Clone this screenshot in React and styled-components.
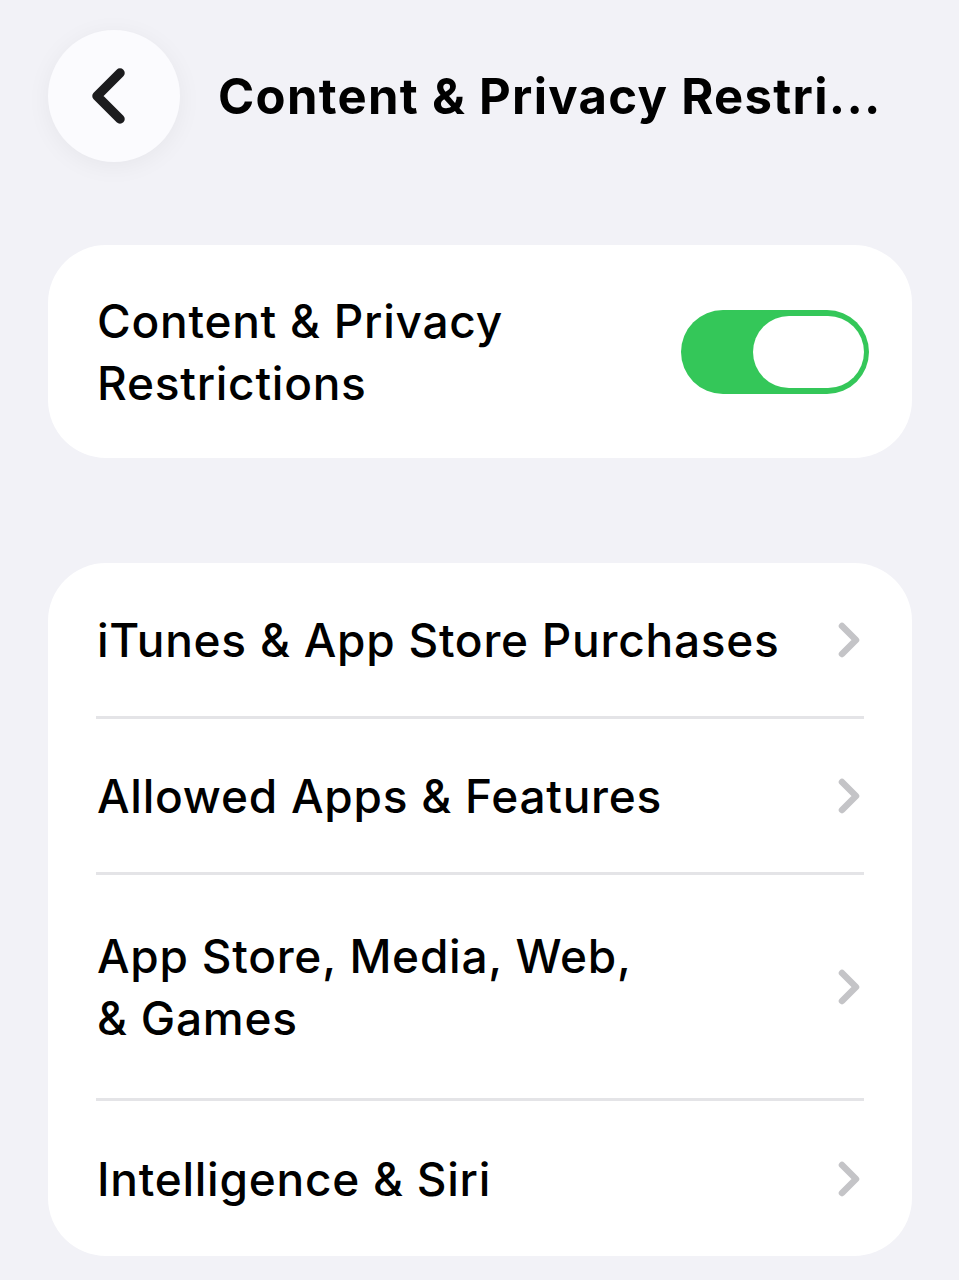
import React from 'react';
import styled, { createGlobalStyle } from 'styled-components';

const GlobalStyle = createGlobalStyle`
	html, body {
		margin: 0;
		padding: 0;
		background: #f2f2f7;
	}
	body {
		font-family: Inter, "Noto Sans", "Liberation Sans", sans-serif;
		color: #000;
		-webkit-font-smoothing: antialiased;
	}
`;

const Page = styled.div`
	width: 959px;
	min-height: 1280px;
	box-sizing: border-box;
	padding: 30px 47px 0 48px;
	display: flex;
	flex-flow: column;
`;

const Header = styled.div`
	display: flex;
	align-items: center;
	gap: 38px;
	height: 132px;
`;

const BackButton = styled.button`
	flex: none;
	width: 132px;
	height: 132px;
	border-radius: 50%;
	border: none;
	outline: none;
	padding: 0;
	background: #fbfbfe;
	box-shadow: 0 4px 24px rgba(0, 0, 0, 0.05);
	display: flex;
	align-items: center;
	justify-content: center;
	cursor: pointer;
	svg {
		margin-left: -10px;
	}
`;

const Title = styled.h1`
	margin: 0;
	font-size: 49px;
	font-weight: 700;
	letter-spacing: 1.3px;
	white-space: nowrap;
	overflow: hidden;
	text-overflow: ellipsis;
`;

const Card = styled.div`
	background: #fff;
	border-radius: 58px;
	margin-top: ${(props) => props.gap}px;
	display: flex;
	flex-flow: column;
`;

const ToggleRow = styled.div`
	display: flex;
	align-items: center;
	justify-content: space-between;
	padding: 45px 43px 44px 49px;
`;

const Label = styled.div`
	font-size: 46px;
	font-weight: 500;
	line-height: 62px;
	letter-spacing: 0.75px;
`;

const Switch = styled.div`
	flex: none;
	width: 188px;
	height: 84px;
	border-radius: 42px;
	background: ${(props) => (props.on ? '#34c759' : '#e9e9eb')};
	display: flex;
	align-items: center;
	justify-content: ${(props) => (props.on ? 'flex-end' : 'flex-start')};
	padding: 0 5px;
	box-sizing: border-box;
`;

const Knob = styled.div`
	width: 111px;
	height: 72px;
	border-radius: 36px;
	background: #fff;
`;

const Row = styled.div`
	display: flex;
	align-items: center;
	justify-content: space-between;
	margin: 0 48px;
	padding: ${(props) => (props.tall ? '50px' : props.last ? '47px' : '46px')} 2px
		${(props) => (props.tall ? '49px' : props.last ? '46px' : '45px')} 1px;
	border-bottom: ${(props) => (props.last ? 'none' : '3px solid #e4e4e7')};
`;

const Chevron = () => (
	<svg width="26" height="40" viewBox="0 0 26 40">
		<path
			d="M6 6 L20 20 L6 34"
			fill="none"
			stroke="#c4c4c7"
			strokeWidth="6.5"
			strokeLinecap="round"
			strokeLinejoin="round"
		/>
	</svg>
);

const BackChevron = () => (
	<svg width="44" height="60" viewBox="0 0 44 60">
		<path
			d="M33 7 L10 30 L33 53"
			fill="none"
			stroke="#1c1c1e"
			strokeWidth="9.5"
			strokeLinecap="round"
			strokeLinejoin="round"
		/>
	</svg>
);

const items = [
	['iTunes & App Store Purchases'],
	['Allowed Apps & Features'],
	['App Store, Media, Web,', '& Games'],
	['Intelligence & Siri']
];

export default function App() {
	return (
		<Page>
			<GlobalStyle />
			<Header>
				<BackButton aria-label="Back">
					<BackChevron />
				</BackButton>
				<Title>Content &amp; Privacy Restri...</Title>
			</Header>

			<Card gap={83}>
				<ToggleRow>
					<Label>
						Content &amp; Privacy
						<br />
						Restrictions
					</Label>
					<Switch on>
						<Knob />
					</Switch>
				</ToggleRow>
			</Card>

			<Card gap={105}>
				{items.map((lines, index) => (
					<Row key={index} tall={lines.length > 1} last={index === items.length - 1}>
						<Label>
							{lines.map((line, i) => (
								<React.Fragment key={i}>
									{i > 0 && <br />}
									{line}
								</React.Fragment>
							))}
						</Label>
						<Chevron />
					</Row>
				))}
			</Card>
		</Page>
	);
}
